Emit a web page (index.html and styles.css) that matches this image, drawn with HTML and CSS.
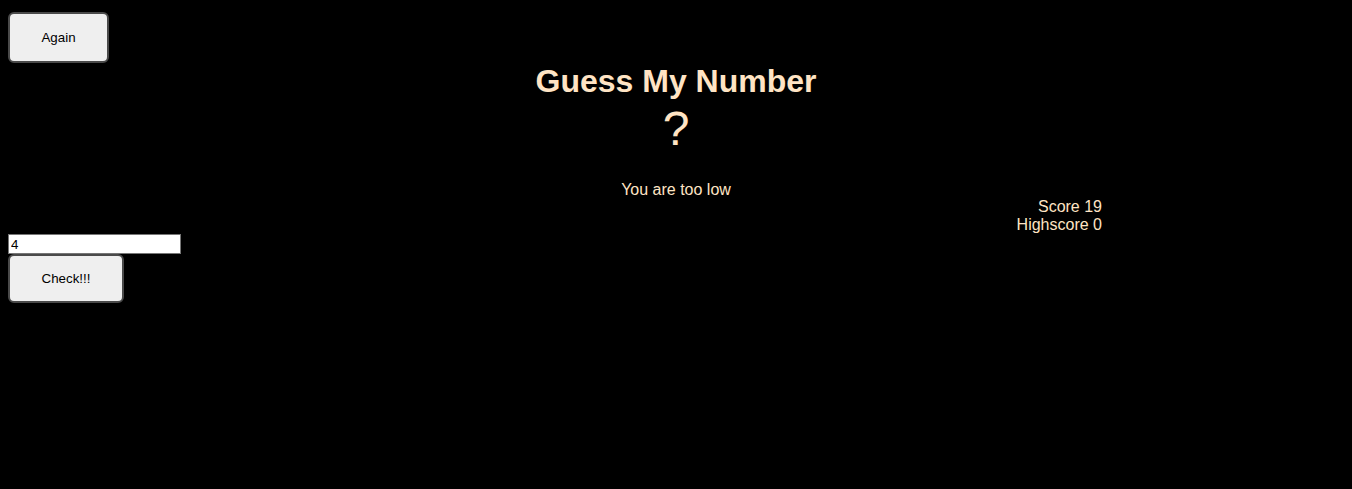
FILE: index.html
```html
<!DOCTYPE html>
<html lang="en">
<head>
<meta charset="utf-8">
<title>Guess My Number</title>
<link rel="stylesheet" href="styles.css">
</head>
<body>
  <header class="header">
    <button class="btn btn-again">Again</button>
    <h1 class="title">Guess My Number</h1>
    <div class="number">?</div>
  </header>
  <main class="main">
    <p class="message">You are too low</p>
    <div class="scores">
      <p class="score-line">Score <span class="score">19</span></p>
      <p class="score-line">Highscore <span class="highscore">0</span></p>
    </div>
    <div class="guess-row">
      <input class="guess" type="number" value="4">
    </div>
    <button class="btn btn-check">Check!!!</button>
  </main>
</body>
</html>
```
FILE: styles.css
```css
html, body {
  background: #000;
}
body {
  margin: 8px;
  color: #ffe4c4;
  font-family: "Liberation Sans", Arial, sans-serif;
  font-size: 16px;
}
.btn {
  display: block;
  font-family: "Liberation Sans", Arial, sans-serif;
  font-size: 13.333px;
  color: #000;
  background: #efefef;
  border: 2px solid #4a4a4a;
  border-radius: 6px;
  padding: 0 30px;
  height: 50px;
  line-height: 16px;
}
.btn-again {
  margin-top: 4px;
  width: 101px;
  height: 51px;
}
.btn-check {
  width: 116px;
  height: 49px;
}
.title {
  margin: 0;
  text-align: center;
  font-size: 32px;
  line-height: 37px;
  font-weight: bold;
}
.number {
  text-align: center;
  font-size: 48px;
  line-height: 57px;
}
.message {
  margin: 24px 0 0;
  text-align: center;
  line-height: 17px;
}
.scores {
  padding-right: 242px;
  text-align: right;
}
.score-line {
  margin: 0;
  line-height: 18px;
}
.guess-row {
  height: 20px;
}
.guess {
  display: block;
  box-sizing: border-box;
  width: 173px;
  height: 20px;
  margin: 0;
  padding: 1px 2px;
  border: 1px solid #767676;
  background: #fff;
  color: #000;
  font-family: "Liberation Sans", Arial, sans-serif;
  font-size: 13.333px;
  -moz-appearance: textfield;
  appearance: textfield;
}
.guess::-webkit-inner-spin-button,
.guess::-webkit-outer-spin-button {
  -webkit-appearance: none;
  margin: 0;
}
```
